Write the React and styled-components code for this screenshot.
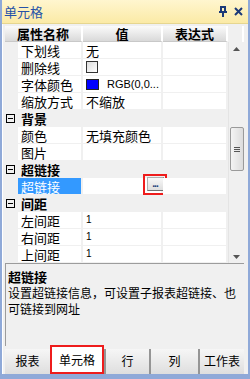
import React from 'react';
import styled, { createGlobalStyle } from 'styled-components';

const Global = createGlobalStyle`
    html, body { margin: 0; padding: 0; background: #fff; }
    body { font-family: "Noto Sans CJK SC", "Liberation Sans", sans-serif; }
    * { box-sizing: border-box; }
`;

const Frame = styled.div`
    width: 250px;
    height: 379px;
    display: flex;
    flex-direction: column;
    border: 2px solid #8fa9d8;
    border-top: none;
    background: #f0f0f0;
`;

const TitleBar = styled.div`
    height: 25px;
    display: flex;
    align-items: center;
    padding: 0 5px 0 2px;
    background: linear-gradient(#fff6cf, #fbeaa6);
    border-bottom: 1px solid #e6d690;
`;

const Title = styled.div`
    flex: 1;
    font-size: 13px;
    color: #2652a8;
`;

const TitleIcons = styled.div`
    display: flex;
    gap: 6px;
    align-items: center;
`;

const Body = styled.div`
    flex: 1;
    display: flex;
    flex-direction: column;
    padding: 2px 1px 0 2px;
    border-left: 1px solid #fff;
`;

const Grid = styled.div`
    display: grid;
    grid-template-columns: 13px 65px 80px 65px 16px;
    grid-template-rows: 16px repeat(13, 17px);
    background: #fff;
    width: 239px;
`;

const HeadCell = styled.div`
    grid-column: ${p => p.span || 'auto'};
    display: flex;
    align-items: center;
    justify-content: center;
    font-size: 13px;
    font-weight: bold;
    color: #000;
    background: ${p => (p.blank ? '#f0f0f0' : 'linear-gradient(#fbfbfb, #d9d9d9)')};
    border-right: 2px solid #fff;
    border-bottom: ${p => (p.blank ? 'none' : '1px solid #c8c8c8')};
    line-height: 1;
`;

const Margin = styled.div`
    grid-column: 1;
    background: #f0f0f0;
    border-bottom: 1px solid #f0f0f0;
`;

const Cell = styled.div`
    display: flex;
    align-items: center;
    padding-left: 3px;
    font-size: 13px;
    line-height: 1;
    white-space: nowrap;
    overflow: ${p => (p.open ? 'visible' : 'hidden')};
    color: ${p => (p.selected ? '#fff' : '#000')};
    background: ${p => (p.selected ? '#3399ff' : '#fff')};
    border-right: 2px solid #f0f0f0;
    border-bottom: 1px solid #f0f0f0;
`;

const CatRow = styled.div`
    grid-column: 1 / 5;
    display: flex;
    align-items: center;
    gap: 6px;
    padding-left: 1px;
    background: #f0f0f0;
    font-size: 13px;
    font-weight: bold;
    line-height: 1;
`;

const Expander = styled.span`
    width: 9px;
    height: 9px;
    border: 1px solid #000;
    position: relative;
    &::after {
        content: '';
        position: absolute;
        left: 1px;
        right: 1px;
        top: 3px;
        height: 1px;
        background: #000;
    }
`;

const Scroll = styled.div`
    grid-column: 5;
    grid-row: 2 / 15;
    display: flex;
    flex-direction: column;
    align-items: center;
    background: #f0f0f0;
    border-left: 1px solid #e4e4e4;
`;

const Arrow = styled.div`
    height: 13px;
    display: flex;
    align-items: center;
    justify-content: center;
`;

const Track = styled.div`
    flex: 1;
    width: 100%;
    padding-top: 72px;
    display: flex;
    justify-content: center;
`;

const Thumb = styled.div`
    width: 14px;
    height: 44px;
    border: 1px solid #9a9a9a;
    border-radius: 2px;
    background: linear-gradient(90deg, #f4f4f4, #dcdcdc);
    display: flex;
    flex-direction: column;
    align-items: center;
    justify-content: center;
    gap: 1px;
`;

const Grip = styled.div`
    width: 6px;
    height: 1px;
    background: #555;
`;

const ColorBox = styled.span`
    width: 13px;
    height: 11px;
    background: #0000ff;
    border: 1px solid #222;
    margin-right: 8px;
`;

const Check = styled.span`
    width: 12px;
    height: 12px;
    border: 1px solid #333;
    background: linear-gradient(135deg, #dcdcdc, #fff);
`;

const Small = styled.span`
    font-family: "Liberation Sans", sans-serif;
    font-size: ${p => p.size || 11}px;
`;

const RedMark = styled.span`
    flex-shrink: 0;
    margin-left: 57px;
    margin-top: -4px;
    width: 24px;
    height: 21px;
    border: 2px solid #ee1c1c;
    display: flex;
    align-items: center;
    justify-content: center;
`;

const EllipsisBtn = styled.span`
    width: 17px;
    height: 14px;
    border: 1px solid #b0b0b0;
    border-right-color: #707070;
    border-bottom-color: #707070;
    background: linear-gradient(#f8f8f8, #dedede);
    display: flex;
    align-items: flex-end;
    justify-content: center;
    font-family: "Liberation Sans", sans-serif;
    font-size: 10px;
    font-weight: bold;
    color: #1a3b7a;
    letter-spacing: -1px;
    line-height: 10px;
    padding-bottom: 1px;
`;

const Desc = styled.div`
    width: 239px;
    height: 83px;
    border-top: 1px solid #9c9c9c;
    border-left: 1px solid #9c9c9c;
    padding: 5px 0 0 2px;
    font-size: 12px;
    line-height: 16px;
    color: #000;
`;

const DescTitle = styled.div`
    font-weight: bold;
    font-size: 13px;
    line-height: 16px;
`;

const Tabs = styled.div`
    margin-top: 1px;
    display: grid;
    grid-template-columns: 45px 54px 45px 49px 46px;
    height: 27px;
    background: #f0f0f0;
    align-items: stretch;
`;

const Tab = styled.div`
    display: flex;
    align-items: center;
    justify-content: center;
    font-size: 12px;
    line-height: 1;
    background: ${p => (p.active ? '#fff' : 'linear-gradient(#f6f6f6, #dedede)')};
    border: ${p => (p.active ? '2px solid #ee1c1c' : 'none')};
    border-left: ${p => (p.active ? '2px solid #ee1c1c' : p.first ? 'none' : '2px solid #959595')};
    margin-top: ${p => (p.active ? '-2px' : '2px')};
    padding-bottom: ${p => (p.active ? '0' : '2px')};
`;

const Bottom = styled.div`
    height: 3px;
    background: #8fa9d8;
    margin: 0 -3px;
`;

const rowsTop = [
    ['下划线', '无'],
    ['删除线', 'check'],
    ['字体颜色', 'color'],
    ['缩放方式', '不缩放'],
];

function Row({ name, value, selected, open, children }) {
    return (
        <>
            <Margin />
            <Cell selected={selected}>{name}</Cell>
            <Cell open={open}>{children || value}</Cell>
            <Cell />
        </>
    );
}

function Cat({ label }) {
    return (
        <CatRow>
            <Expander />
            {label}
        </CatRow>
    );
}

export default function App() {
    return (
        <>
            <Global />
            <Frame>
                <TitleBar>
                    <Title>单元格</Title>
                    <TitleIcons>
                        <svg width="10" height="11" viewBox="0 0 10 11">
                            <path d="M2 1h6M3 1v5M7 1v5M1 6h8M5 6v5" stroke="#1c3a78" strokeWidth="2" fill="none" />
                        </svg>
                        <svg width="9" height="9" viewBox="0 0 9 9">
                            <path d="M1 1l7 7M8 1l-7 7" stroke="#1c3a78" strokeWidth="2" />
                        </svg>
                    </TitleIcons>
                </TitleBar>
                <Body>
                    <Grid>
                        <HeadCell span="1 / 3">属性名称</HeadCell>
                        <HeadCell>值</HeadCell>
                        <HeadCell>表达式</HeadCell>
                        <HeadCell blank />

                        {rowsTop.map(([n, v]) => (
                            <Row key={n} name={n}>
                                {v === 'check' ? <Check /> : v === 'color' ? (
                                    <>
                                        <ColorBox />
                                        <Small>RGB(0,0...</Small>
                                    </>
                                ) : v}
                            </Row>
                        ))}
                        <Cat label="背景" />
                        <Row name="颜色" value="无填充颜色" />
                        <Row name="图片" />
                        <Cat label="超链接" />
                        <Row name="超链接" selected open>
                            <RedMark>
                                <EllipsisBtn>...</EllipsisBtn>
                            </RedMark>
                        </Row>
                        <Cat label="间距" />
                        <Row name="左间距"><Small size={10}>1</Small></Row>
                        <Row name="右间距"><Small size={10}>1</Small></Row>
                        <Row name="上间距"><Small size={10}>1</Small></Row>

                        <Scroll>
                            <Arrow>
                                <svg width="7" height="4" viewBox="0 0 7 4"><path d="M0 4L3.5 0 7 4z" fill="#555" /></svg>
                            </Arrow>
                            <Track>
                                <Thumb>
                                    <Grip /><Grip /><Grip />
                                </Thumb>
                            </Track>
                            <Arrow>
                                <svg width="7" height="4" viewBox="0 0 7 4"><path d="M0 0L3.5 4 7 0z" fill="#555" /></svg>
                            </Arrow>
                        </Scroll>
                    </Grid>
                    <Desc>
                        <DescTitle>超链接</DescTitle>
                        设置超链接信息，可设置子报表超链接、也可链接到网址
                    </Desc>
                    <Tabs>
                        <Tab first>报表</Tab>
                        <Tab active>单元格</Tab>
                        <Tab>行</Tab>
                        <Tab>列</Tab>
                        <Tab>工作表</Tab>
                    </Tabs>
                </Body>
                <Bottom />
            </Frame>
        </>
    );
}
